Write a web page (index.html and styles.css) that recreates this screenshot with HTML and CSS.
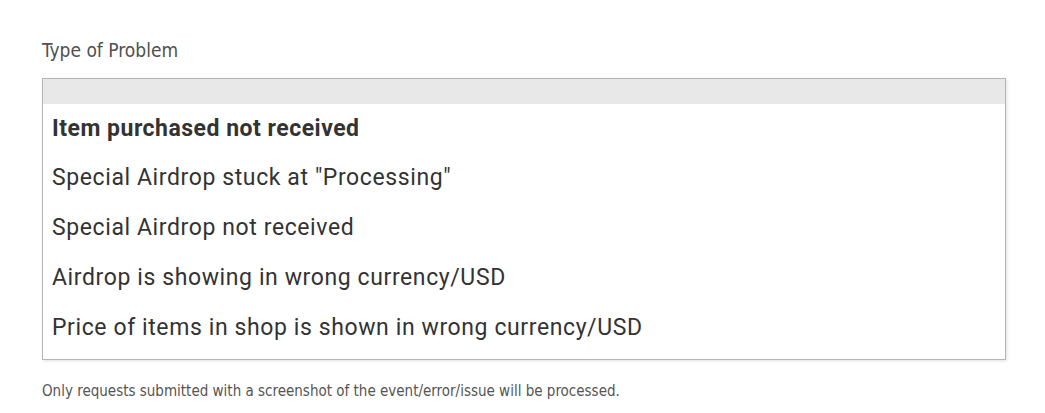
FILE: index.html
```html
<!DOCTYPE html>
<html>

<head>
    <title>Report a Problem</title>
    <link rel="stylesheet" href="styles.css">
</head>

<body>
    <div class="form-field">
        <label class="field-label" for="problem-type">Type of Problem</label>
        <div class="select-list" id="problem-type">
            <div class="select-head"></div>
            <div class="option selected">Item purchased not received</div>
            <div class="option">Special Airdrop stuck at "Processing"</div>
            <div class="option">Special Airdrop not received</div>
            <div class="option">Airdrop is showing in wrong currency/USD</div>
            <div class="option">Price of items in shop is shown in wrong currency/USD</div>
        </div>
        <p class="field-note">Only requests submitted with a screenshot of the event/error/issue will be processed.</p>
    </div>
</body>

</html>
```

FILE: styles.css
```css
body {
    margin: 0;
    background-color: #fff;
}

.form-field {
    padding: 38px 39px 0 42px;
}

.field-label {
    display: block;
    font-family: "DejaVu Sans Condensed", "DejaVu Sans", sans-serif;
    font-size: 19px;
    color: #505050;
    line-height: 24px;
    margin-bottom: 16px;
}

.select-list {
    width: 962px;
    border: 1px solid #b5b5b5;
    box-shadow: 1px 1px 3px rgba(0, 0, 0, 0.12);
    background-color: #fff;
    padding-bottom: 6px;
}

.select-head {
    height: 25px;
    background-color: #e8e8e8;
}

.option {
    font-family: Roboto, "Liberation Sans", sans-serif;
    font-size: 23px;
    letter-spacing: 0.6px;
    color: #333;
    line-height: 50px;
    padding-left: 9px;
}

.option.selected {
    font-weight: bold;
    letter-spacing: 0.5px;
    line-height: 49px;
}

.field-note {
    font-family: "DejaVu Sans Condensed", "DejaVu Sans", sans-serif;
    font-size: 15px;
    color: #555;
    margin: 22px 0 0;
}
```
